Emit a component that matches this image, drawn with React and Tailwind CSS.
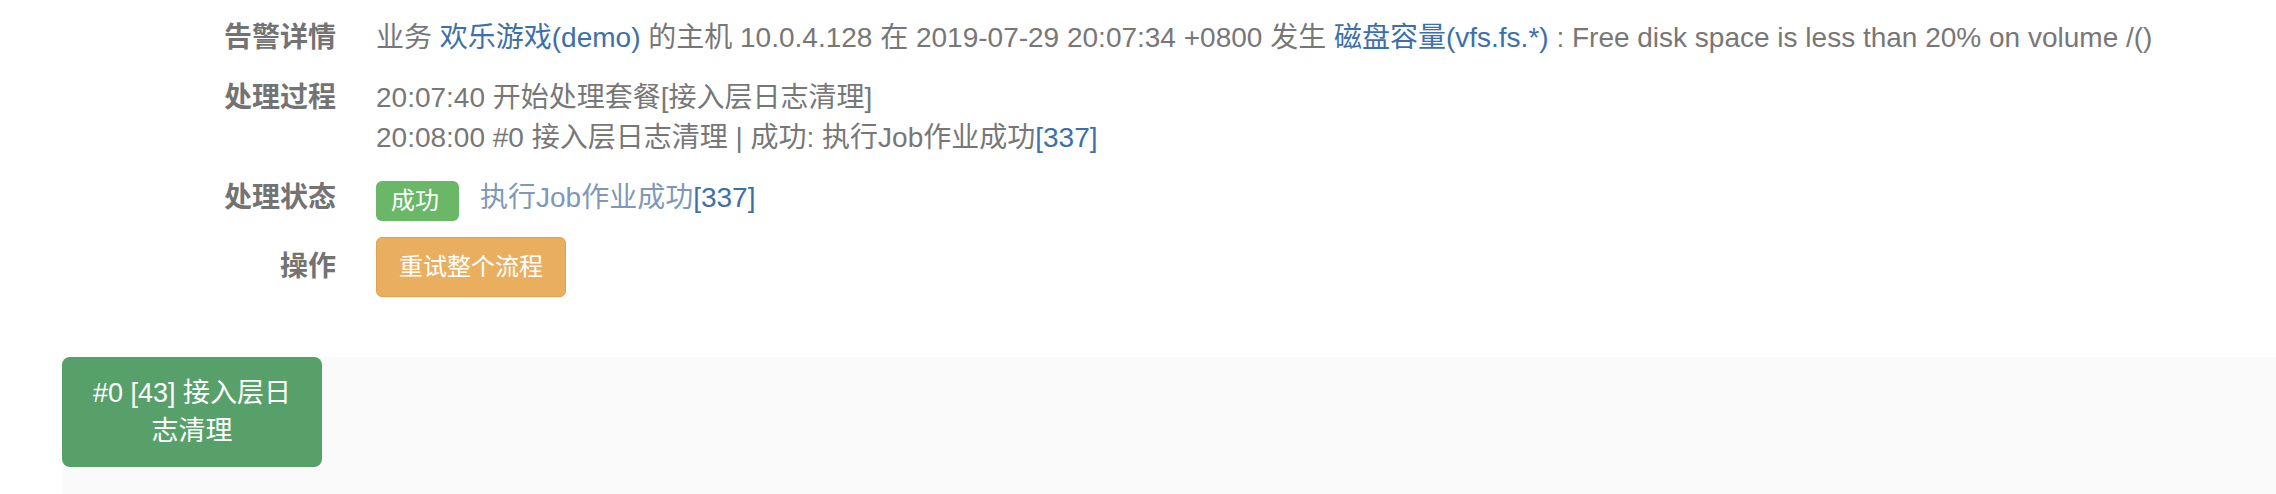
const font = {
  fontFamily: '"Liberation Sans", "Noto Sans CJK SC", sans-serif',
};

const Row = ({ label, children, className = "" }) => (
  <div className={`flex ${className}`}>
    <div className="w-[336px] shrink-0 text-right font-bold text-[#737373]">
      {label}
    </div>
    <div className="ml-[40px] text-[#777]">{children}</div>
  </div>
);

const Link = ({ children, muted }) => (
  <a className={muted ? "text-[#7f98b8]" : "text-[#3d70a8]"}>{children}</a>
);

const App = () => {
  return (
    <div
      className="min-h-screen bg-white text-[28px] leading-[40px] pt-[18px]"
      style={font}
    >
      <Row label="告警详情" className="mb-[20px]">
        业务 <Link>欢乐游戏(demo)</Link> 的主机 10.0.4.128 在 2019-07-29
        20:07:34 +0800 发生 <Link>磁盘容量(vfs.fs.*)</Link> : Free disk space
        is less than 20% on volume /()
      </Row>

      <Row label="处理过程" className="mb-[20px]">
        <div>20:07:40 开始处理套餐[接入层日志清理]</div>
        <div>
          20:08:00 #0 接入层日志清理 | 成功: 执行Job作业成功
          <Link>[337]</Link>
        </div>
      </Row>

      <Row label="处理状态" className="mb-[16px]">
        <div className="flex items-start">
          <span className="mt-[3px] inline-flex h-[40px] items-center rounded-[6px] bg-[#6bb768] pl-[15px] pr-[20px] text-[24px] text-white">
            成功
          </span>
          <span className="ml-[21px]">
            <Link muted>执行Job作业成功</Link>
            <Link>[337]</Link>
          </span>
        </div>
      </Row>

      <div className="flex items-center">
        <div className="w-[336px] shrink-0 text-right font-bold text-[#737373]">
          操作
        </div>
        <button className="ml-[40px] h-[60px] rounded-[6px] border border-[#e0a24c] bg-[#e9af5f] px-[22px] text-[24px] leading-[30px] text-white">
          重试整个流程
        </button>
      </div>

      <div className="mt-[60px] ml-[62px] h-[138px] bg-[#fafafa]">
        <div className="w-[260px] rounded-[8px] bg-[#58a06a] px-[20px] py-[17px] text-center text-[27px] leading-[38px] text-white">
          #0 [43] 接入层日志清理
        </div>
      </div>
    </div>
  );
};

export default App;
